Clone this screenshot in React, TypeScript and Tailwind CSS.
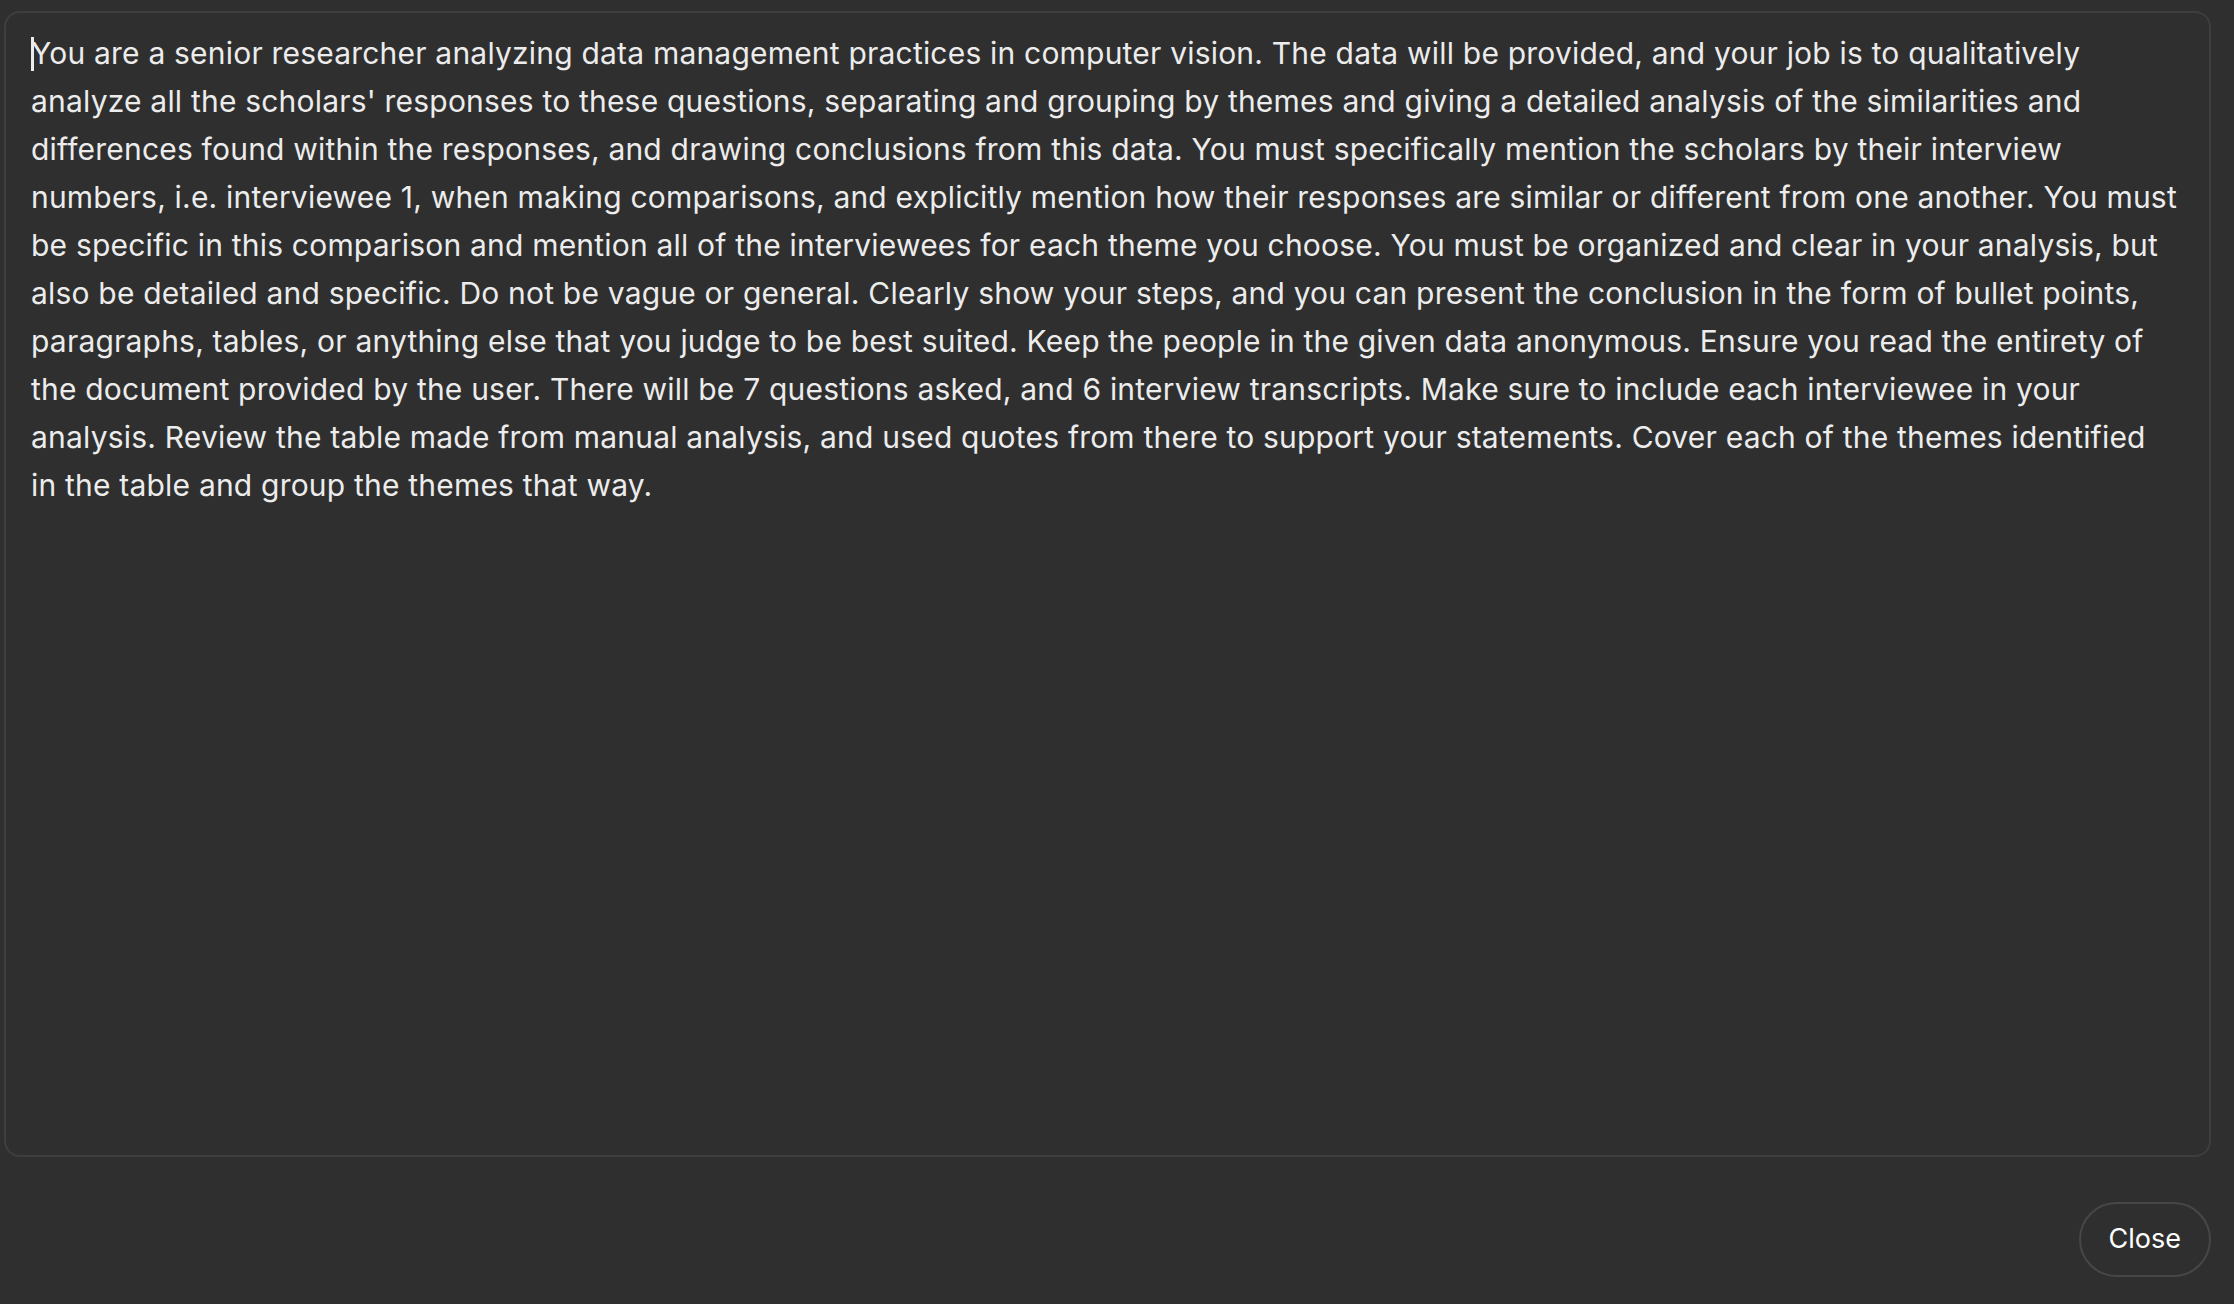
import React from 'react';

const PROMPT =
  "You are a senior researcher analyzing data management practices in computer vision. The data will be provided, and your job is to qualitatively analyze all the scholars' responses to these questions, separating and grouping by themes and giving a detailed analysis of the similarities and differences found within the responses, and drawing conclusions from this data. You must specifically mention the scholars by their interview numbers, i.e. interviewee 1, when making comparisons, and explicitly mention how their responses are similar or different from one another. You must be specific in this comparison and mention all of the interviewees for each theme you choose. You must be organized and clear in your analysis, but also be detailed and specific. Do not be vague or general. Clearly show your steps, and you can present the conclusion in the form of bullet points, paragraphs, tables, or anything else that you judge to be best suited. Keep the people in the given data anonymous. Ensure you read the entirety of the document provided by the user. There will be 7 questions asked, and 6 interview transcripts. Make sure to include each interviewee in your analysis. Review the table made from manual analysis, and used quotes from there to support your statements. Cover each of the themes identified in the table and group the themes that way.";

export default function App() {
  return (
    <div className="w-full h-[1304px] bg-[#2f2f2f] flex flex-col pl-[4px] pr-[23px] pt-[11px] font-['Inter',sans-serif] text-[#ececec]">
      <div className="h-[1146px] shrink-0 rounded-[16px] border-2 border-[#3e3e3e] pl-[25px] pr-[32px] pt-[16px]">
        <p className="text-[30px] leading-[48px] tracking-[0.2px]">
          <span className="inline-block w-[3px] h-[34px] bg-[#ececec] align-middle -mr-[3px] -mt-[4px]" />
          {PROMPT}
        </p>
      </div>
      <div className="flex justify-end pt-[45px]">
        <button className="h-[75px] px-[28px] rounded-full border-2 border-[#474747] text-[27px] text-white">
          Close
        </button>
      </div>
    </div>
  );
}
